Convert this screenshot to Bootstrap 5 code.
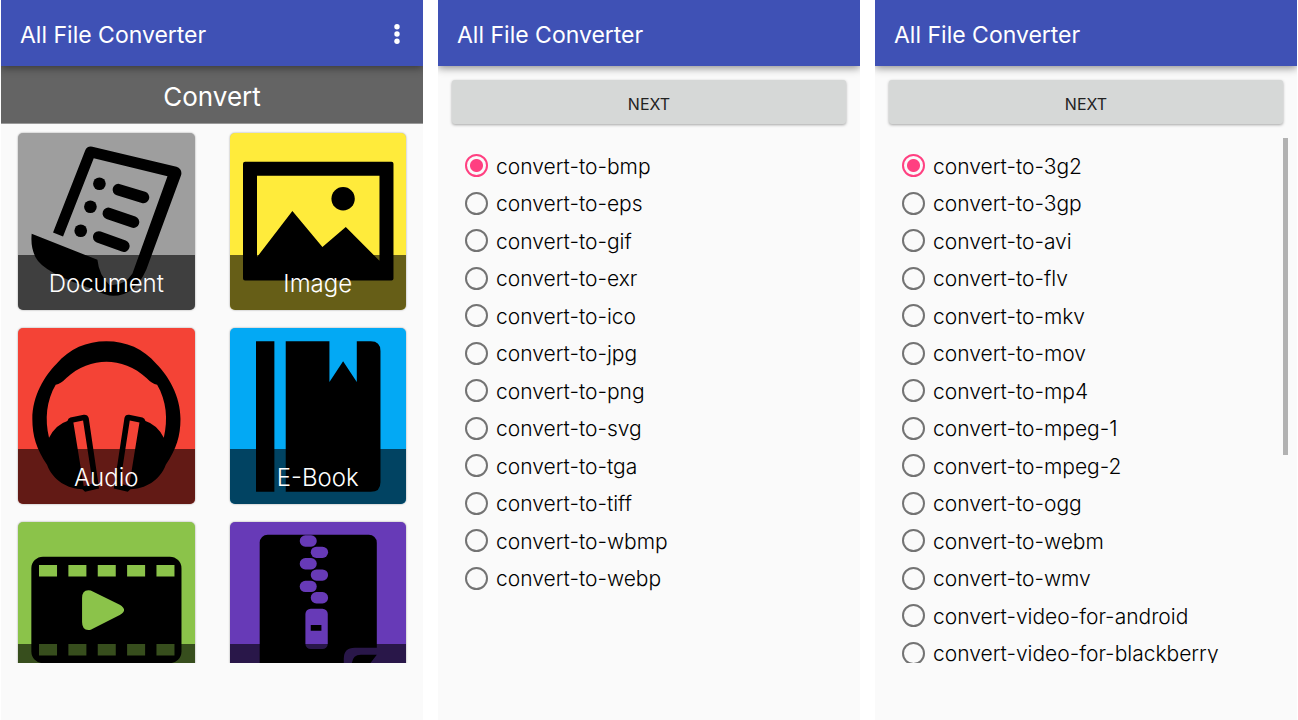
<!DOCTYPE html>
<html lang="en">
<head>
<meta charset="utf-8">
<meta name="viewport" content="width=device-width, initial-scale=1">
<title>All File Converter</title>
<link rel="stylesheet" href="https://cdn.jsdelivr.net/npm/bootstrap@5.3.0/dist/css/bootstrap.min.css">
<style>
  body { font-family: Inter, Roboto, sans-serif; font-weight: 300; background: #fff; color: #111; }
  .screens { display: grid; grid-template-columns: repeat(3, minmax(0, 1fr)); gap: 15px; padding: 0 1px; }
  .screen { height: 100vh; background: #fafafa; padding-bottom: 57px; }
  .appbar { height: 66px; padding: 3px 18px 0 19px; background: #3f51b5; color: #fff; box-shadow: 0 2px 8px rgba(0,0,0,.45); z-index: 1; clip-path: inset(0 0 -14px 0); }
  .appbar h1 { font-size: 23px; font-weight: 400; line-height: 32px; }
  .menu-btn { width: 16px; height: 32px; color: #fff; }
  .section-title { height: 58px; padding-top: 4px; font-size: 26px; font-weight: 400; background: #646464; color: #fff; border-bottom: 1px solid #999; }
  .viewport { min-height: 0; overflow: hidden; }
  .tiles { display: grid; grid-template-columns: 1fr 1fr; gap: 18px 35px; padding: 9px 17px; }
  .tile { aspect-ratio: 1; border-radius: 5px; overflow: hidden; color: #fff; box-shadow: 0 0 2px rgba(0,0,0,.4); }
  .tile:hover { color: #fff; }
  .tile svg { display: block; width: 100%; height: 100%; }
  .caption { height: 55px; padding-top: 3px; font-size: 24px; background: rgba(0,0,0,.6); }
  .gray { background: #9e9e9e; } .yellow { background: #ffeb3b; } .red { background: #f44336; }
  .blue { background: #03a9f4; } .green { background: #8bc34a; } .purple { background: #673ab7; }
  .next-btn { height: 44px; margin: 14px; border: 0; border-radius: 3px; padding: 3px 0 0; font-size: 16px; font-weight: 400; color: #222; background: #d6d8d7; box-shadow: 0 1px 3px rgba(0,0,0,.35); }
  .options { display: grid; grid-auto-rows: 37px 38px; padding: 9px 27px 0; }
  .option { display: flex; align-items: center; gap: 8px; font-size: 21px; line-height: 30px; color: #000; }
  .option input { appearance: none; flex: none; width: 23px; height: 23px; margin: 0; border: 2px solid #737373; border-radius: 50%; }
  .option input:checked { border-color: #ff4081; background: radial-gradient(circle, #ff4081 0 6px, transparent 7px); }
  .option label { white-space: nowrap; padding-top: 2px; }
  .thumb { right: 9px; width: 5px; height: 60.4%; background: #b2b2b2; }
</style>
</head>
<body>
<div class="screens">
  <main class="screen d-flex flex-column">
    <header class="appbar d-flex align-items-center justify-content-between position-relative flex-shrink-0">
      <h1 class="m-0">All File Converter</h1>
      <button type="button" class="menu-btn btn p-0 border-0 d-flex align-items-center justify-content-center" aria-label="More options">
        <svg width="8" height="22" viewBox="0 0 8 22" fill="currentColor"><circle cx="4" cy="2.7" r="2.7"/><circle cx="4" cy="10" r="2.7"/><circle cx="4" cy="17.3" r="2.7"/></svg>
      </button>
    </header>
    <h2 class="section-title d-flex align-items-center justify-content-center flex-shrink-0 m-0">Convert</h2>
    <div class="viewport flex-grow-1">
      <div class="tiles">
        <a href="#document" class="tile gray position-relative text-decoration-none">
          <svg viewBox="25 22 529 529"><path d="M130 320 226 75Q232 60 248 63L500 123Q518 130 514 148L410 430Q375 510 310 510 290 510 250 490 100 440 78 395 62 365 66 324L263 402Q268 450 300 478 345 480 368 443L473 152 252 98 160 332Z"/><circle cx="269" cy="174" r="19"/><circle cx="242" cy="243" r="19"/><circle cx="213" cy="315" r="19"/><path d="M326 192 401 215M296 263 371 289M267 334 342 361" stroke="#000" stroke-width="35" stroke-linecap="round"/></svg>
          <span class="caption position-absolute bottom-0 start-0 end-0 d-flex align-items-center justify-content-center">Document</span>
        </a>
        <a href="#image" class="tile yellow position-relative text-decoration-none">
          <svg viewBox="28 22 529 529"><path fill-rule="evenodd" d="M73 108H512Q518 108 518 114V458Q518 464 512 464H73Q67 464 67 458V114Q67 108 73 108ZM109 150V394L215 256 305 364 375 304 476 405V150Z"/><circle cx="367" cy="219" r="35"/></svg>
          <span class="caption position-absolute bottom-0 start-0 end-0 d-flex align-items-center justify-content-center">Image</span>
        </a>
        <a href="#audio" class="tile red position-relative text-decoration-none">
          <svg viewBox="25 22 529 529"><path fill-rule="evenodd" d="M112 432C80 385 68 345 68 295 68 225 105 165 140 130 180 84 230 62 290 62 350 62 400 84 440 130 475 165 512 225 512 295 512 345 500 385 468 432 450 480 405 505 362 505L354 513 312 503 344 292Q346 281 358 282L398 290Q405 292 407 301 442 312 462 351C475 295 470 240 442 192Q426 189 410 172C375 138 330 123 290 123 250 123 205 138 170 172Q154 189 138 192C110 240 105 295 118 351Q138 312 173 301 175 292 182 290L222 282Q234 281 237 292L268 503 226 513 218 505C175 505 130 480 112 432ZM191 305 220 299 249 488 222 496ZM389 305 360 299 331 488 358 496Z"/></svg>
          <span class="caption position-absolute bottom-0 start-0 end-0 d-flex align-items-center justify-content-center">Audio</span>
        </a>
        <a href="#ebook" class="tile blue position-relative text-decoration-none">
          <svg viewBox="28 22 529 529"><path d="M106 62H161V513H106ZM195 62H326V184L367 122 408 184V62H450Q479 62 479 91V484Q479 513 450 513H195Z"/></svg>
          <span class="caption position-absolute bottom-0 start-0 end-0 d-flex align-items-center justify-content-center">E-Book</span>
        </a>
        <a href="#video" class="tile green position-relative" aria-label="Video">
          <svg viewBox="25 22 529 529"><rect x="65" y="126" width="450" height="319" rx="35"/><path fill="#8bc34a" d="M88 151h54v34H88zM176 151h54v34h-54zM264 151h54v34h-54zM352 151h54v34h-54zM440 151h54v34h-54zM88 388h54v34H88zM176 388h54v34h-54zM264 388h54v34h-54zM352 388h54v34h-54zM440 388h54v34h-54zM217 250Q217 222 243 227L330 270Q356 286 330 301L243 345Q217 350 217 322Z"/></svg>
          <span class="caption position-absolute bottom-0 start-0 end-0"></span>
        </a>
        <a href="#archive" class="tile purple position-relative" aria-label="Archive">
          <svg viewBox="28 22 529 529"><rect x="117" y="60" width="351" height="452" rx="24"/><g fill="#673ab7"><rect x="237" y="62" width="51" height="34" rx="17"/><rect x="270" y="96" width="52" height="34" rx="17"/><rect x="237" y="130" width="51" height="34" rx="17"/><rect x="270" y="164" width="52" height="34" rx="17"/><rect x="237" y="198" width="51" height="34" rx="17"/><rect x="270" y="232" width="52" height="34" rx="17"/><rect x="254" y="282" width="67" height="121" rx="16"/><path d="M369 520V432Q369 399 402 399H470V520Z"/></g><path d="M270 331h32v17h-32zM393 446Q396 420 420 420H468L444 451H393Z"/></svg>
          <span class="caption position-absolute bottom-0 start-0 end-0"></span>
        </a>
      </div>
    </div>
  </main>

  <section class="screen d-flex flex-column">
    <header class="appbar d-flex align-items-center position-relative flex-shrink-0"><h1 class="m-0">All File Converter</h1></header>
    <button type="button" class="next-btn flex-shrink-0">NEXT</button>
    <div class="viewport flex-grow-1">
      <div class="options">
        <div class="option"><input type="radio" name="image" id="i1" checked><label for="i1">convert-to-bmp</label></div>
        <div class="option"><input type="radio" name="image" id="i2"><label for="i2">convert-to-eps</label></div>
        <div class="option"><input type="radio" name="image" id="i3"><label for="i3">convert-to-gif</label></div>
        <div class="option"><input type="radio" name="image" id="i4"><label for="i4">convert-to-exr</label></div>
        <div class="option"><input type="radio" name="image" id="i5"><label for="i5">convert-to-ico</label></div>
        <div class="option"><input type="radio" name="image" id="i6"><label for="i6">convert-to-jpg</label></div>
        <div class="option"><input type="radio" name="image" id="i7"><label for="i7">convert-to-png</label></div>
        <div class="option"><input type="radio" name="image" id="i8"><label for="i8">convert-to-svg</label></div>
        <div class="option"><input type="radio" name="image" id="i9"><label for="i9">convert-to-tga</label></div>
        <div class="option"><input type="radio" name="image" id="i10"><label for="i10">convert-to-tiff</label></div>
        <div class="option"><input type="radio" name="image" id="i11"><label for="i11">convert-to-wbmp</label></div>
        <div class="option"><input type="radio" name="image" id="i12"><label for="i12">convert-to-webp</label></div>
      </div>
    </div>
  </section>

  <section class="screen d-flex flex-column">
    <header class="appbar d-flex align-items-center position-relative flex-shrink-0"><h1 class="m-0">All File Converter</h1></header>
    <button type="button" class="next-btn flex-shrink-0">NEXT</button>
    <div class="viewport flex-grow-1 position-relative">
      <div class="options">
        <div class="option"><input type="radio" name="video" id="v1" checked><label for="v1">convert-to-3g2</label></div>
        <div class="option"><input type="radio" name="video" id="v2"><label for="v2">convert-to-3gp</label></div>
        <div class="option"><input type="radio" name="video" id="v3"><label for="v3">convert-to-avi</label></div>
        <div class="option"><input type="radio" name="video" id="v4"><label for="v4">convert-to-flv</label></div>
        <div class="option"><input type="radio" name="video" id="v5"><label for="v5">convert-to-mkv</label></div>
        <div class="option"><input type="radio" name="video" id="v6"><label for="v6">convert-to-mov</label></div>
        <div class="option"><input type="radio" name="video" id="v7"><label for="v7">convert-to-mp4</label></div>
        <div class="option"><input type="radio" name="video" id="v8"><label for="v8">convert-to-mpeg-1</label></div>
        <div class="option"><input type="radio" name="video" id="v9"><label for="v9">convert-to-mpeg-2</label></div>
        <div class="option"><input type="radio" name="video" id="v10"><label for="v10">convert-to-ogg</label></div>
        <div class="option"><input type="radio" name="video" id="v11"><label for="v11">convert-to-webm</label></div>
        <div class="option"><input type="radio" name="video" id="v12"><label for="v12">convert-to-wmv</label></div>
        <div class="option"><input type="radio" name="video" id="v13"><label for="v13">convert-video-for-android</label></div>
        <div class="option"><input type="radio" name="video" id="v14"><label for="v14">convert-video-for-blackberry</label></div>
      </div>
      <div class="thumb position-absolute top-0"></div>
    </div>
  </section>
</div>
<script src="https://cdn.jsdelivr.net/npm/bootstrap@5.3.0/dist/js/bootstrap.bundle.min.js"></script>
</body>
</html>
